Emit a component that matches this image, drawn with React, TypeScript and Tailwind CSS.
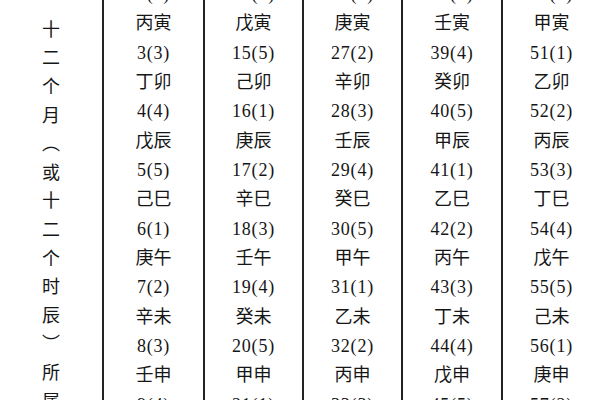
// Each column: number row, ganzhi row, alternating. The first and last rows are cut by the frame.
const COLUMNS = [
  ['2(2)', '丙寅', '3(3)', '丁卯', '4(4)', '戊辰', '5(5)', '己巳', '6(1)', '庚午', '7(2)', '辛未', '8(3)', '壬申', '9(4)'],
  ['14(4)', '戊寅', '15(5)', '己卯', '16(1)', '庚辰', '17(2)', '辛巳', '18(3)', '壬午', '19(4)', '癸未', '20(5)', '甲申', '21(1)'],
  ['26(1)', '庚寅', '27(2)', '辛卯', '28(3)', '壬辰', '29(4)', '癸巳', '30(5)', '甲午', '31(1)', '乙未', '32(2)', '丙申', '33(3)'],
  ['38(3)', '壬寅', '39(4)', '癸卯', '40(5)', '甲辰', '41(1)', '乙巳', '42(2)', '丙午', '43(3)', '丁未', '44(4)', '戊申', '45(5)'],
  ['50(5)', '甲寅', '51(1)', '乙卯', '52(2)', '丙辰', '53(3)', '丁巳', '54(4)', '戊午', '55(5)', '己未', '56(1)', '庚申', '57(2)'],
];

const WIDTHS = ['w-[101px]', 'w-[99px]', 'w-[99px]', 'w-[100px]', 'flex-1'];

function Cell({ text }: { text: string }) {
  const isNumber = /\d/.test(text);
  return (
    <div className="h-[29.35px] shrink-0 flex items-center justify-center">
      <span className={isNumber ? 'text-[18px] tracking-[0.8px]' : 'text-[18px]'}>{text}</span>
    </div>
  );
}

export default function App() {
  return (
    <div
      className="w-[600px] h-[400px] overflow-hidden bg-white flex text-[#161616] leading-none"
      style={{ fontFamily: '"Liberation Serif", "Noto Sans CJK SC", serif' }}
    >
      {/* Vertical caption, set as real vertical text so the brackets take their vertical forms */}
      <div className="w-[102px] shrink-0 flex justify-center pt-[20px]">
        <p className="[writing-mode:vertical-rl] font-['Noto_Sans_CJK_SC',sans-serif] text-[18px] leading-[18px] tracking-[10.6px] whitespace-nowrap">
          十二个月（或十二个时辰）所属
        </p>
      </div>

      {COLUMNS.map((col, c) => (
        <div key={c} className={`${WIDTHS[c]} shrink-0 border-l-2 border-[#222] flex flex-col`}>
          <div className="flex flex-col mt-[-20.7px]">
            {col.map((t, i) => (
              <Cell key={i} text={t} />
            ))}
          </div>
        </div>
      ))}
    </div>
  );
}
